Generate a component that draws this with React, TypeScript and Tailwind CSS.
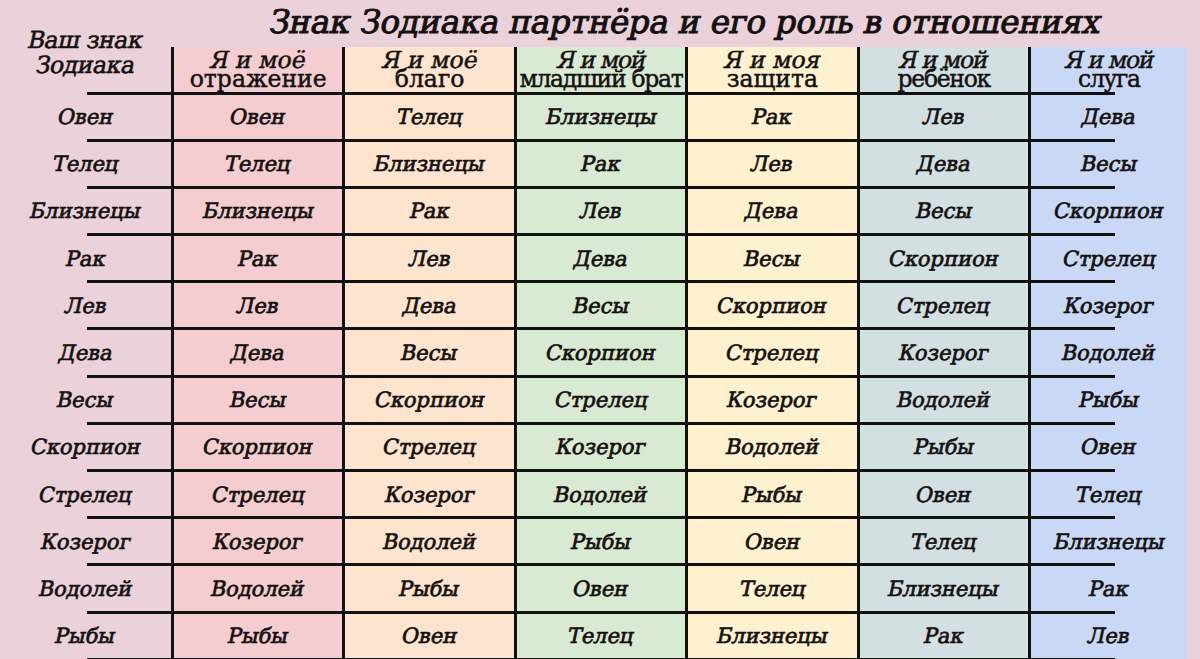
import React from "react";

const SIGNS = ["Овен", "Телец", "Близнецы", "Рак", "Лев", "Дева", "Весы", "Скорпион", "Стрелец", "Козерог", "Водолей", "Рыбы"];

type Col = { l1: string; l2: string; bg: string; narrow?: boolean; w: string; last?: boolean };

const COLS: Col[] = [
  { l1: "Я и моё", l2: "отражение", bg: "bg-[#f4cdd0]", w: "w-[171.4px]" },
  { l1: "Я и моё", l2: "благо", bg: "bg-[#fde4cf]", w: "w-[171.4px]" },
  { l1: "Я и мой", l2: "младший брат", bg: "bg-[#d9ead3]", narrow: true, w: "w-[171.4px]" },
  { l1: "Я и моя", l2: "защита", bg: "bg-[#fef1cf]", w: "w-[171.4px]" },
  { l1: "Я и мой", l2: "ребёнок", bg: "bg-[#d3e0e3]", narrow: true, w: "w-[171.4px]" },
  { l1: "Я и мой", l2: "слуга", bg: "bg-[#c9d9f5]", narrow: true, w: "w-[159px]", last: true },
];

function Cell({ text }: { text: string }) {
  return (
    <span className="inline-block -skew-x-12 text-[21px] font-normal leading-none text-[#141010] [-webkit-text-stroke:0.7px_#141010]">
      {text}
    </span>
  );
}

export default function App() {
  return (
    <div className="w-[1200px] h-[659px] overflow-hidden bg-[#ebd1da] flex flex-col font-['DejaVu_Serif',serif] text-[#141010]">
      <div className="h-[47px] shrink-0 flex items-start pl-[270px] pt-[1px]">
        <span className="inline-block -skew-x-12 text-[32.5px] font-normal leading-[42px] tracking-[-0.2px] [-webkit-text-stroke:1px_#141010]">
          Знак Зодиака партнёра и его роль в отношениях
        </span>
      </div>
      <div className="flex flex-1">
        {/* first column */}
        <div className="w-[171px] shrink-0 flex flex-col">
          <div className="h-[47.5px] shrink-0 flex flex-col">
            <div className="flex-1 flex flex-col items-center -mt-[19px] text-[23.5px] font-normal leading-[25px] [-webkit-text-stroke:0.6px_#141010]">
              <span className="inline-block -skew-x-12 tracking-[-0.4px]">Ваш знак</span>
              <span className="inline-block -skew-x-12 tracking-[-0.4px]">Зодиака</span>
            </div>
            <div className="h-[3px] ml-[87px] bg-[#111] shrink-0" />
          </div>
          {SIGNS.map((s) => (
            <div key={s} className="h-[47.2px] shrink-0 flex flex-col">
              <div className="flex-1 flex items-center justify-center pt-[2px]">
                <Cell text={s} />
              </div>
              <div className="h-[3px] ml-[87px] bg-[#111] shrink-0" />
            </div>
          ))}
        </div>
        {COLS.map((c, ci) => (
          <div key={ci} className={`${c.w} shrink-0 flex flex-col border-l-[3px] border-[#111] ${c.bg}`}>
            <div className="h-[47.5px] shrink-0 flex flex-col">
              <div className="flex-1 flex flex-col items-center justify-end pb-[3px] text-[23.5px] leading-[19px] [-webkit-text-stroke:0.45px_#141010]">
                {c.narrow ? (
                  <>
                    <span className="inline-block whitespace-nowrap -skew-x-12 tracking-[-1.3px]">{c.l1}</span>
                    <span className="inline-block whitespace-nowrap tracking-[-1.3px]">{c.l2}</span>
                  </>
                ) : (
                  <>
                    <span className="inline-block whitespace-nowrap -skew-x-12">{c.l1}</span>
                    <span className="inline-block whitespace-nowrap">{c.l2}</span>
                  </>
                )}
              </div>
              {c.last ? (
                <div className="h-[3px] w-[84px] bg-[#111] shrink-0" />
              ) : (
                <div className="h-[3px] bg-[#111] shrink-0" />
              )}
            </div>
            {SIGNS.map((_, ri) => (
              <div key={ri} className="h-[47.2px] shrink-0 flex flex-col">
                <div className="flex-1 flex items-center justify-center pt-[2px]">
                  <Cell text={SIGNS[(ri + ci) % 12]} />
                </div>
                {c.last ? (
                  <div className="h-[3px] w-[84px] bg-[#111] shrink-0" />
                ) : (
                  <div className="h-[3px] bg-[#111] shrink-0" />
                )}
              </div>
            ))}
          </div>
        ))}
      </div>
    </div>
  );
}
